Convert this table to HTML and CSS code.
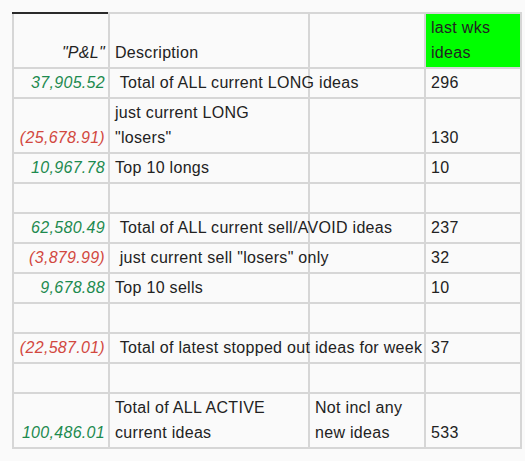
FILE: index.html
```html
<!DOCTYPE html>
<html>
<head>
<meta charset="utf-8">
<link rel="stylesheet" href="styles.css">
</head>
<body>
<table class="sheet">
  <colgroup>
    <col class="c1"><col class="c2"><col class="c3"><col class="c4">
  </colgroup>
  <tr>
    <td class="num hdr first">"P&amp;L"</td>
    <td>Description</td>
    <td></td>
    <td class="green">last wks ideas</td>
  </tr>
  <tr>
    <td class="num pos">37,905.52</td>
    <td class="nw">&nbsp;Total of ALL current LONG ideas</td>
    <td></td>
    <td>296</td>
  </tr>
  <tr>
    <td class="num neg">(25,678.91)</td>
    <td>just current LONG "losers"</td>
    <td></td>
    <td>130</td>
  </tr>
  <tr>
    <td class="num pos">10,967.78</td>
    <td>Top 10 longs</td>
    <td></td>
    <td>10</td>
  </tr>
  <tr class="empty"><td></td><td></td><td></td><td></td></tr>
  <tr>
    <td class="num pos">62,580.49</td>
    <td class="nw">&nbsp;Total of ALL current sell/AVOID ideas</td>
    <td></td>
    <td>237</td>
  </tr>
  <tr>
    <td class="num neg">(3,879.99)</td>
    <td class="nw">&nbsp;just current sell "losers" only</td>
    <td></td>
    <td>32</td>
  </tr>
  <tr>
    <td class="num pos">9,678.88</td>
    <td>Top 10 sells</td>
    <td></td>
    <td>10</td>
  </tr>
  <tr class="empty"><td></td><td></td><td></td><td></td></tr>
  <tr>
    <td class="num neg">(22,587.01)</td>
    <td class="nw">&nbsp;Total of latest stopped out ideas for week</td>
    <td></td>
    <td>37</td>
  </tr>
  <tr class="empty"><td></td><td></td><td></td><td></td></tr>
  <tr>
    <td class="num pos">100,486.01</td>
    <td>Total of ALL ACTIVE current ideas</td>
    <td>Not incl any new ideas</td>
    <td>533</td>
  </tr>
</table>
</body>
</html>
```

FILE: styles.css
```css
html, body {
  background: #fafafa;
}
body {
  margin: 0;
  padding: 12px 0 0 12px;
  font-family: "Liberation Sans", Arial, sans-serif;
  font-size: 16px;
  letter-spacing: 0.3px;
  color: #222;
}
.sheet {
  border-collapse: collapse;
  table-layout: fixed;
  width: 510px;
}
.c1 { width: 96px; }
.c2 { width: 200px; }
.c3 { width: 116px; }
.c4 { width: 96px; }
.sheet td {
  border: 2px solid #d6d6d6;
  padding: 1px 3px 2px 5px;
  line-height: 25px;
  vertical-align: bottom;
  text-align: left;
  overflow: visible;
}
.sheet td.num {
  text-align: right;
  font-style: italic;
  padding-left: 2px;
}
.sheet td.first {
  border-top-color: #2a2a2a;
}
.hdr { color: #222; }
.pos { color: #1d8a4f; }
.neg { color: #d2483f; }
.nw { white-space: nowrap; }
.green {
  background: #00ff00;
}
.empty td {
  height: 25px;
}
```
